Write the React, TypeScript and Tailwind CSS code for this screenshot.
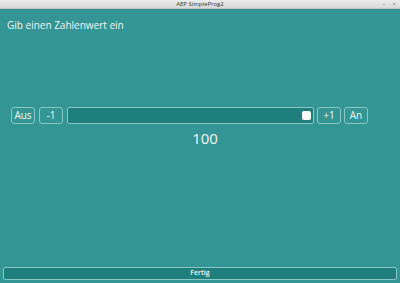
export default function App() {
    const btn = "h-[17px] w-[24px] flex items-center justify-center rounded-[3px] border border-[#8cc6c4] text-[10px] text-[#f4f4f4]";

    return (
        <div className="w-[400px] h-[283px] flex flex-col bg-[#339594] overflow-hidden" style={{ fontFamily: '"Open Sans", sans-serif' }}>
            <div className="relative h-[9px] flex items-center justify-center bg-gradient-to-b from-[#ececec] to-[#d9d9d9] border-b border-[#c4c4c4]">
                <span className="text-[6px] leading-none text-[#333]">AEP SimpleProg2</span>
                <div className="absolute right-[4px] top-0 h-full flex items-center gap-[7px] text-[6px] leading-none text-[#777]">
                    <span>–</span>
                    <span>×</span>
                </div>
            </div>

            <div className="mt-[10px] pl-[7px] h-[12px] text-[10px] leading-[12px] text-[#f4f4f4]">Gib einen Zahlenwert ein</div>

            <div className="mt-[76px] pl-[11px] flex items-center">
                <div className={btn}>Aus</div>
                <div className={btn + " ml-[4px]"}>-1</div>
                <div className="ml-[4px] h-[17px] w-[247px] flex items-center justify-end pr-[2px] rounded-[2px] border border-[#8cc6c4] bg-[#1f7f7c]">
                    <div className="w-[9px] h-[9px] rounded-[2px] bg-white" />
                </div>
                <div className={btn + " ml-[3px]"}>+1</div>
                <div className={btn + " ml-[3px]"}>An</div>
            </div>

            <div className="mt-[5px] pl-[10px] text-center text-[15px] leading-[18px] text-[#f4f4f4]">100</div>

            <div className="flex-1" />

            <div className="mx-[3px] mb-[3px] h-[13px] flex items-center justify-center rounded-[2px] border border-[#8cc6c4] bg-[#1f7f7c] text-[7px] font-semibold text-[#f4f4f4]">Fertig</div>
        </div>
    )
}
